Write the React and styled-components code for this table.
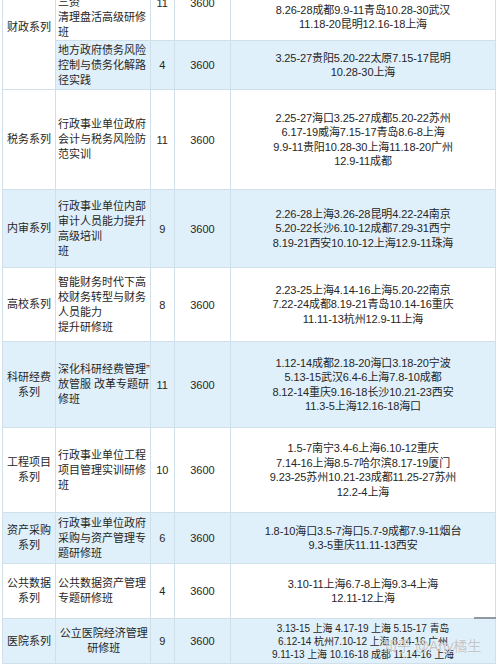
import React from "react";
import styled, { createGlobalStyle } from "styled-components";

const Global = createGlobalStyle`
  html, body { margin: 0; padding: 0; background: #ffffff; }
  body { font-family: "Liberation Sans", "Noto Sans CJK SC", sans-serif; }
`;

const Page = styled.div`
  position: relative;
  width: 500px;
  height: 667px;
  overflow: hidden;
  padding: 0 4px 0 2px;
  box-sizing: border-box;
  background: #ffffff;
`;

const Table = styled.table`
  width: 494px;
  margin-top: -36px;
  border-collapse: collapse;
  table-layout: fixed;
  color: #262626;
  font-size: 11px;
  font-family: "Liberation Sans", "Noto Sans CJK SC", sans-serif;
`;

const Row = styled.tr`
  height: ${(p) => p.$h}px;
  background: ${(p) => (p.$shade ? "#e0f0fb" : "#ffffff")};
`;

const Cell = styled.td`
  border: 1px solid #cfe0ea;
  padding: 0;
  vertical-align: middle;
  white-space: nowrap;
  overflow: hidden;
`;

const CategoryCell = styled(Cell)`
  text-align: center;
  line-height: 15px;
  background: ${(p) => (p.$shade ? "#e0f0fb" : "#ffffff")};
`;

const CourseCell = styled(Cell)`
  text-align: ${(p) => (p.$center ? "center" : "left")};
  padding-left: 2px;
  line-height: 15px;
`;

const NumCell = styled(Cell)`
  text-align: center;
`;

const DateCell = styled(Cell)`
  text-align: center;
  font-size: ${(p) => (p.$compact ? "10px" : "11px")};
  line-height: ${(p) => (p.$compact ? "13px" : "14.5px")};
  letter-spacing: -0.1px;
`;

const Line = styled.div``;

const Watermark = styled.div`
  position: absolute;
  left: 383px;
  top: 635px;
  font-size: 14px;
  font-family: "Liberation Sans", "Noto Sans CJK SC", sans-serif;
  color: rgba(190, 190, 190, 0.9);
  text-shadow: 0 0 1px rgba(255, 255, 255, 0.9);
  white-space: nowrap;
  pointer-events: none;
`;

const Tick = styled.div`
  position: absolute;
  left: 474px;
  top: 617px;
  width: 22px;
  height: 2px;
  background: #8e9aa2;
`;

const rows = [
  {
    cat: ["财政系列"],
    span: 2,
    shade: false,
    h: 76,
    course: ["行政事业单位国有", "资产管理暨", "三资", "清理盘活高级研修", "班"],
    n: "11",
    dates: [
      "2.26-28海口3.25-27昆明4.22-24南京",
      "5.20-22上海6.17-19西宁7.15-17长沙",
      "8.26-28成都9.9-11青岛10.28-30武汉",
      "11.18-20昆明12.16-18上海",
    ],
  },
  {
    sub: true,
    shade: true,
    h: 49,
    course: ["地方政府债务风险", "控制与债务化解路", "径实践"],
    n: "4",
    dates: ["3.25-27贵阳5.20-22太原7.15-17昆明", "10.28-30上海"],
  },
  {
    cat: ["税务系列"],
    shade: false,
    h: 100,
    course: ["行政事业单位政府", "会计与税务风险防", "范实训"],
    n: "11",
    dates: [
      "2.25-27海口3.25-27成都5.20-22苏州",
      "6.17-19威海7.15-17青岛8.6-8上海",
      "9.9-11贵阳10.28-30上海11.18-20广州",
      "12.9-11成都",
    ],
  },
  {
    cat: ["内审系列"],
    shade: true,
    h: 78,
    course: ["行政事业单位内部", "审计人员能力提升", "高级培训", "班"],
    n: "9",
    dates: [
      "2.26-28上海3.26-28昆明4.22-24南京",
      "5.20-22长沙6.10-12成都7.29-31西宁",
      "8.19-21西安10.10-12上海12.9-11珠海",
    ],
  },
  {
    cat: ["高校系列"],
    shade: false,
    h: 74,
    course: ["智能财务时代下高", "校财务转型与财务", "人员能力", "提升研修班"],
    n: "8",
    dates: [
      "2.23-25上海4.14-16上海5.20-22南京",
      "7.22-24成都8.19-21青岛10.14-16重庆",
      "11.11-13杭州12.9-11上海",
    ],
  },
  {
    cat: ["科研经费", "系列"],
    shade: true,
    h: 86,
    course: ["深化科研经费管理”", "放管服 改革专题研", "修班"],
    n: "11",
    dates: [
      "1.12-14成都2.18-20海口3.18-20宁波",
      "5.13-15武汉6.4-6上海7.8-10成都",
      "8.12-14重庆9.16-18长沙10.21-23西安",
      "11.3-5上海12.16-18海口",
    ],
  },
  {
    cat: ["工程项目", "系列"],
    shade: false,
    h: 85,
    course: ["行政事业单位工程", "项目管理实训研修", "班"],
    n: "10",
    dates: [
      "1.5-7南宁3.4-6上海6.10-12重庆",
      "7.14-16上海8.5-7哈尔滨8.17-19厦门",
      "9.23-25苏州10.21-23成都11.25-27苏州",
      "12.2-4上海",
    ],
  },
  {
    cat: ["资产采购", "系列"],
    shade: true,
    h: 51,
    course: ["行政事业单位政府", "采购与资产管理专", "题研修班"],
    n: "6",
    dates: ["1.8-10海口3.5-7海口5.7-9成都7.9-11烟台", "9.3-5重庆11.11-13西安"],
  },
  {
    cat: ["公共数据", "系列"],
    shade: false,
    h: 55,
    course: ["公共数据资产管理", "专题研修班"],
    n: "4",
    dates: ["3.10-11上海6.7-8上海9.3-4上海", "12.11-12上海"],
  },
  {
    cat: ["医院系列"],
    shade: true,
    h: 45,
    center: true,
    compact: true,
    course: ["公立医院经济管理", "研修班"],
    n: "9",
    dates: [
      "3.13-15 上海 4.17-19 上海 5.15-17 青岛",
      "6.12-14 杭州7.10-12 上海 8.14-16 广州",
      "9.11-13 上海 10.16-18 成都 11.14-16 上海",
    ],
  },
];

const Lines = ({ items }) => items.map((t, i) => <Line key={i}>{t}</Line>);

export default function App() {
  return (
    <Page>
      <Global />
      <Table>
        <colgroup>
          <col style={{ width: "53px" }} />
          <col style={{ width: "94.5px" }} />
          <col style={{ width: "24.5px" }} />
          <col style={{ width: "56px" }} />
          <col />
        </colgroup>
        <tbody>
          {rows.map((r, i) => (
            <Row key={i} $h={r.h} $shade={r.shade}>
              {!r.sub && (
                <CategoryCell rowSpan={r.span || 1} $shade={r.shade}>
                  <Lines items={r.cat} />
                </CategoryCell>
              )}
              <CourseCell $center={r.center}>
                <Lines items={r.course} />
              </CourseCell>
              <NumCell>{r.n}</NumCell>
              <NumCell>3600</NumCell>
              <DateCell $compact={r.compact}>
                <Lines items={r.dates} />
              </DateCell>
            </Row>
          ))}
        </tbody>
      </Table>
      <Tick />
      <Watermark>知乎 @Any橘生</Watermark>
    </Page>
  );
}
